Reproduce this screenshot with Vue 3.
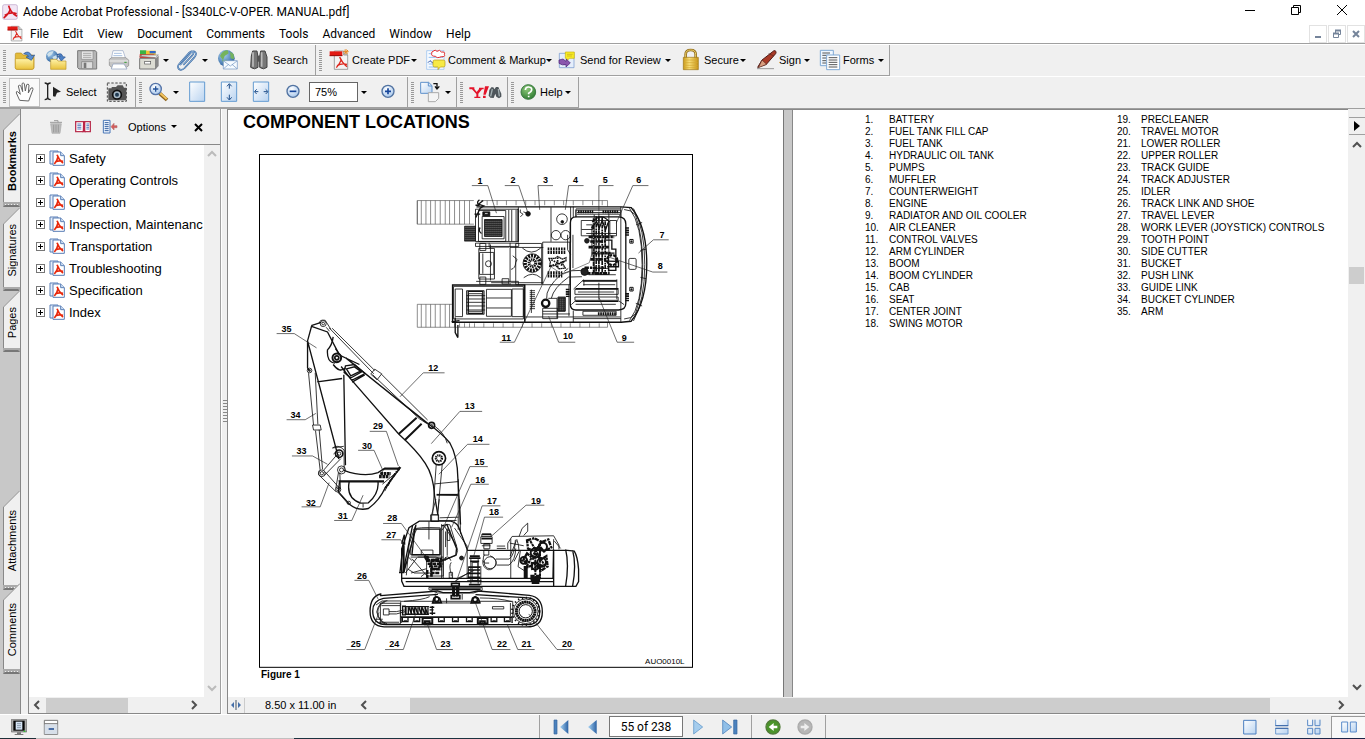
<script setup>
const menus = ['File', 'Edit', 'View', 'Document', 'Comments', 'Tools', 'Advanced', 'Window', 'Help']
const bookmarks = ['Safety', 'Operating Controls', 'Operation', 'Inspection, Maintenanc', 'Transportation', 'Troubleshooting', 'Specification', 'Index']
const partsA = ['BATTERY', 'FUEL TANK FILL CAP', 'FUEL TANK', 'HYDRAULIC OIL TANK', 'PUMPS', 'MUFFLER', 'COUNTERWEIGHT', 'ENGINE', 'RADIATOR AND OIL COOLER', 'AIR CLEANER', 'CONTROL VALVES', 'ARM CYLINDER', 'BOOM', 'BOOM CYLINDER', 'CAB', 'SEAT', 'CENTER JOINT', 'SWING MOTOR']
const partsB = ['PRECLEANER', 'TRAVEL MOTOR', 'LOWER ROLLER', 'UPPER ROLLER', 'TRACK GUIDE', 'TRACK ADJUSTER', 'IDLER', 'TRACK LINK AND SHOE', 'TRAVEL LEVER', 'WORK LEVER (JOYSTICK) CONTROLS', 'TOOTH POINT', 'SIDE CUTTER', 'BUCKET', 'PUSH LINK', 'GUIDE LINK', 'BUCKET CYLINDER', 'ARM']
const topTabs = [['Bookmarks', 'bookmarks'], ['Signatures', 'signatures'], ['Pages', 'pages']]
const lowTabs = [['Attachments', 'attachments'], ['Comments', 'comments']]

// callouts: number, text x, baseline y, leader polyline
const topCalls = [
  [1, 231, 56, '214,62 262,62 288,145'], [2, 330, 54, '313,62 355,62 383,145'], [3, 428, 55, '458,62 413,62 418,135'],
  [4, 518, 55, '550,62 505,62 495,135'], [5, 608, 55, '640,62 596,62 596,140'], [6, 708, 55, '745,62 698,62 648,175'],
  [7, 778, 219, '806,225 760,225 715,265'], [8, 773, 312, '802,322 758,322 620,275'], [9, 665, 529, '702,533 651,533 597,400'],
  [10, 488, 524, '525,533 475,533 445,455'], [11, 303, 528, '298,533 342,533 455,300'],
]
const boomCalls = [
  [35, 77, 66, '62,72 115,72 182,115'], [12, 518, 185, '567,190 503,190 433,262'], [13, 628, 298, '680,306 613,306 527,403'],
  [14, 652, 398, '702,405 636,405 550,495'], [15, 657, 466, '697,472 643,472 568,645'], [16, 659, 520, '700,525 646,525 588,655'],
  [34, 104, 326, '92,331 148,331 180,312'], [29, 352, 360, '342,366 392,366 428,470'], [30, 319, 418, '307,423 355,423 380,480'],
  [33, 122, 434, '108,440 170,440 215,465'], [32, 150, 590, '137,593 193,593 220,520'], [31, 246, 630, '235,634 288,634 322,558'],
]
const bodyCalls = [
  [28, 140, 66, '127,73 182,73 260,180'], [27, 137, 116, '122,122 180,122 192,140'], [26, 49, 239, '41,244 84,244 112,300'],
  [25, 30, 445, '17,452 72,452 115,340'], [24, 146, 445, '133,452 188,452 225,345'], [23, 300, 445, '337,452 288,452 260,375'],
  [22, 470, 445, '510,452 455,452 405,312'], [21, 543, 445, '583,452 532,452 500,375'], [20, 665, 445, '703,452 650,452 565,345'],
  [19, 572, 14, '612,18 557,18 452,112'], [18, 446, 47, '488,54 432,54 400,170'], [17, 440, 14, '480,20 425,20 345,255'],
]
</script>

<template>
  <div class="app">
    <svg class="defs" width="0" height="0" aria-hidden="true">
      <defs>
        <linearGradient id="fold" x1="0" y1="0" x2="0" y2="1"><stop offset="0" stop-color="#fff3a8" /><stop offset="1" stop-color="#e9c23c" /></linearGradient>
        <linearGradient id="sheet" x1="0" y1="0" x2="1" y2="1"><stop offset="0" stop-color="#ffffff" /><stop offset="1" stop-color="#b9d3f0" /></linearGradient>
        <linearGradient id="nav" x1="0" y1="0" x2="1" y2="0"><stop offset="0" stop-color="#a8d4f4" /><stop offset="1" stop-color="#2c62a4" /></linearGradient>
        <linearGradient id="gold" x1="0" y1="0" x2="1" y2="0"><stop offset="0" stop-color="#c99a18" /><stop offset=".4" stop-color="#f8e07a" /><stop offset="1" stop-color="#c79316" /></linearGradient>
        <radialGradient id="globe" cx=".35" cy=".3" r=".8"><stop offset="0" stop-color="#a8d0f0" /><stop offset="1" stop-color="#1f5595" /></radialGradient>
        <radialGradient id="green" cx=".4" cy=".3" r=".8"><stop offset="0" stop-color="#8cc878" /><stop offset="1" stop-color="#26742c" /></radialGradient>
        <radialGradient id="lens" cx=".4" cy=".3" r=".8"><stop offset="0" stop-color="#ffffff" /><stop offset="1" stop-color="#9cc0ea" /></radialGradient>
        <symbol id="bm" viewBox="0 0 48 48">
          <path d="M3 3h24v39H3z" fill="#e4eefb" stroke="#5b7fb6" stroke-width="3" />
          <path d="M12 6h23l11 11v29H12z" fill="#fff" stroke="#5b7fb6" stroke-width="3" /><path d="M35 6v11h11" fill="#cfe0f5" stroke="#5b7fb6" stroke-width="3" />
          <path d="M24 14q5 15 18 25M27 20q-2 12-11 22M19 36q10-6 23-2" fill="none" stroke="#e8280c" stroke-width="5" />
        </symbol>
        <symbol id="pdf" viewBox="0 0 72 72">
          <path d="M22 9h28l12 12v43H22z" fill="#f4f4f4" stroke="#777" stroke-width="2" /><path d="M50 9v12h12" fill="#ccc" stroke="#777" stroke-width="2" />
          <path d="M8 10h38v14H8z" fill="#e21a14" /><path d="M8 23h38" stroke="#950f0c" stroke-width="3" />
          <path d="M38 27q6 16 22 29M43 34q-4 13-15 25M30 53q14-8 30-4" fill="none" stroke="#dd261c" stroke-width="4" />
        </symbol>
      </defs>
    </svg>

    <header class="titlebar">
      <svg class="appicon" viewBox="0 0 48 48"><rect x="2" y="2" width="44" height="44" rx="5" fill="#f2e6f5" stroke="#b7a0c6" stroke-width="2" /><path d="M20 5q4 20 25 32M25 14q-3 15-20 28M8 34q18-12 36-5" fill="none" stroke="#d4141e" stroke-width="5" /></svg>
      <span class="title">Adobe Acrobat Professional - [S340LC-V-OPER. MANUAL.pdf]</span>
      <button class="win" aria-label="Minimize"><svg viewBox="0 0 12 12"><path d="M1 6.500h10" /></svg></button>
      <button class="win" aria-label="Restore"><svg viewBox="0 0 12 12"><path d="M1.500 3.500h7v7h-7zM3.500 3.500v-2h7v7h-2" /></svg></button>
      <button class="win" aria-label="Close"><svg viewBox="0 0 12 12"><path d="M1 1l10 10M11 1L1 11" /></svg></button>
    </header>

    <nav class="menubar">
      <svg class="docicon" viewBox="6 5 60 62"><use href="#pdf" width="72" height="72" /></svg>
      <button v-for="m in menus" :key="m" class="menu">{{ m }}</button>
      <span class="mdis">
        <button class="mdi" aria-label="Minimize document"><svg viewBox="0 0 12 12"><path d="M3 9h6" stroke-width="2" /></svg></button>
        <button class="mdi" aria-label="Restore document"><svg viewBox="0 0 12 12"><path d="M2.500 5.500h5v4h-5zM4.500 5V2.500h5v4H8" /><path d="M2 5.500h6M4 2.500h6" stroke-width="2" /></svg></button>
        <button class="mdi" aria-label="Close document"><svg viewBox="0 0 12 12"><path d="M3 3l6 6M9 3L3 9" stroke-width="2" /></svg></button>
      </span>
    </nav>

    <div class="toolrow">
      <div class="group files">
        <i class="grip"></i>
        <button class="tool" aria-label="Open"><svg viewBox="39 144 72 72"><path d="M46 163q0-4 4-4h14l5 6h28q5 0 5 5v32q0 6-6 6H51q-5 0-5-5z" fill="#e3bb3a" stroke="#b58d1c" stroke-width="2" /><path d="M46 176h55v27q0 5-5 5H51q-5 0-5-5z" fill="url(#fold)" stroke="#c59a24" stroke-width="2" /><path d="M71 161q15-12 24 6l9-2-10 16-16-10 8-2q-5-7-15-8z" fill="#5a8ed0" stroke="#254f8c" stroke-width="2" /></svg></button>
        <button class="tool" aria-label="Open web page"><svg viewBox="135 144 72 72"><circle cx="159" cy="169" r="18" fill="url(#globe)" /><path d="M144 163q8-12 20-9l-5 9-10 8zM160 171l12-6 2 9-8 9z" fill="#cde0ea" /><path d="M155 178h18l4 5h24v25h-46z" fill="url(#fold)" stroke="#bd9525" stroke-width="2" /><path d="M174 164q15-8 17 6l8 1-12 12-10-14h7q-2-4-10-5z" fill="#4c80c5" stroke="#244f8d" stroke-width="2" /></svg></button>
        <button class="tool" aria-label="Save"><svg viewBox="231 144 72 72"><path d="M239 152h53l4 5v50h-53l-4-4z" fill="#b5b5b5" stroke="#777" stroke-width="3" /><path d="M250 153h35v25h-35z" fill="#e8e8e8" stroke="#888" stroke-width="2" /><path d="M255 160h25M255 166h25M255 172h25" stroke="#888" stroke-width="2" /><path d="M251 185h33v21h-33z" fill="#ddd" stroke="#777" stroke-width="2" /><path d="M257 188h8v16h-8z" fill="#777" /></svg></button>
        <button class="tool" aria-label="Print"><svg viewBox="324 144 72 72"><path d="M340 176l5-24h30l8 24z" fill="#fff" stroke="#92a3c2" stroke-width="2" /><path d="M348 160h23M346 167h27" stroke="#a8c0e0" stroke-width="3" /><path d="M334 178l7-5h42l9 7v17l-7 5h-44l-7-6z" fill="#c5c5c5" stroke="#858585" stroke-width="2" /><path d="M334 183h57" stroke="#eee" stroke-width="3" /><path d="M345 192h33l9 15h-47z" fill="#fff" stroke="#8799b8" stroke-width="2" /><path d="M379 187h7" stroke="#393" stroke-width="3" /></svg></button>
        <button class="tool wide" aria-label="Organizer"><svg viewBox="417 144 72 72"><path d="M426 151h18l4 5v13h-22z" fill="#3bb444" /><path d="M444 152h29v15h-29z" fill="#f0c432" /><path d="M455 153h18v7h-18z" fill="#2f68cc" /><path d="M425 163h42l5 5v6h-47z" fill="#e33428" /><path d="M425 169l8-4h48l-8 8z" fill="#efefef" stroke="#777" stroke-width="2" /><path d="M425 175h48v32h-48z" fill="#dcdcd3" stroke="#777" stroke-width="3" /><path d="M474 174l8-7v31l-8 8z" fill="#888" /><rect x="440" y="184" width="18" height="8" fill="#fff" stroke="#555" stroke-width="2" /></svg><i class="arrow"></i></button>
        <button class="tool clip" aria-label="Attach"><svg viewBox="534 144 72 72"><path d="M549 195l32-36q8-8 14-2 5 6-3 15l-29 32q-10 9-17 3-8-7 3-18l28-31q8-7 12-1 2 4-4 10l-26 28" fill="none" stroke="#34659f" stroke-width="5" /><path d="M549 195l32-36q8-8 14-2 5 6-3 15l-29 32q-10 9-17 3-8-7 3-18l28-31q8-7 12-1 2 4-4 10l-26 28" fill="none" stroke="#a9c8ea" stroke-width="2" /></svg><i class="arrow"></i></button>
        <button class="tool" aria-label="E-mail"><svg viewBox="657 144 72 72"><circle cx="688" cy="175" r="25" fill="url(#globe)" /><path d="M669 168q7-17 23-17l3 9-12 8-5 13zM699 155l11 7 1 16-10-3zM675 181l14-2 3 16-9-1z" fill="#75b35d" /><path d="M679 182h42v25h-42z" fill="#f6fbff" stroke="#6c91bf" stroke-width="2" /><path d="M680 183l20 15 20-15M680 206l15-13M720 206l-15-13" fill="none" stroke="#6c91bf" stroke-width="2" /></svg></button>
        <button class="tool search"><svg viewBox="747 144 72 72"><path d="M764 153h13l3 18v31q-11 9-22 0l2-34zM788 153h13l6 18v31q-11 9-22 0v-32z" fill="#777" stroke="#444" stroke-width="3" /><path d="M765 157v43M791 157v43" stroke="#bbb" stroke-width="5" /><path d="M778 167h9v18h-9z" fill="#555" /></svg>Search</button>
      </div>
      <div class="group tasks">
        <i class="grip"></i>
        <button class="task create"><svg viewBox="0 0 72 72"><use href="#pdf" width="72" height="72" /><path d="M57 3v16M49 11h16M52 6l11 11M63 6L52 17" stroke="#e78b28" stroke-width="3" /></svg>Create PDF<i class="arrow"></i></button>
        <button class="task comment"><svg viewBox="1272 144 72 72"><path d="M1280 152h52v56h-52z" fill="#f8fbff" stroke="#8ebcee" stroke-width="2" /><path d="M1286 161h40M1286 172h43M1286 192h18M1286 201h25" stroke="#90bff0" stroke-width="3" /><path d="M1299 154q7-7 12 0 9-7 13 2 13-1 9 7 4 8-9 7-14 6-17-1-14 0-12-8-1-6 4-7z" fill="#fff" stroke="#e42828" stroke-width="3" /><path d="M1284 188l6-6 7 6 5-3" fill="none" stroke="#274fa6" stroke-width="3" /><path d="M1304 180h26q5 0 5 5v11q0 5-5 5h-9l-7 8v-8h-10q-5 0-5-5v-11q0-5 5-5z" fill="#f7ea45" stroke="#b49614" stroke-width="2" /></svg>Comment &amp; Markup<i class="arrow"></i></button>
        <button class="task send"><svg viewBox="324 22 72 72"><path d="M334 38h44v43h-44z" fill="#e5eefb" stroke="#6d91ca" stroke-width="2" /><path d="M352 34h27v19h-14l-9 7v-7h-4z" fill="#f8ec22" stroke="#c6af13" stroke-width="2" /><path d="M357 41h17M357 46h15" stroke="#c6aa20" stroke-width="2" /><path d="M333 58l12-3 9 7 1-7 12 12-13 12v-7q-12 3-21-4z" fill="#8a55ad" stroke="#472073" stroke-width="2" /></svg>Send for Review<i class="arrow"></i></button>
        <button class="task secure"><svg viewBox="684 24 72 72"><path d="M704 54V43q0-13 15-13t15 13v11" fill="none" stroke="#947020" stroke-width="8" /><path d="M704 54V43q0-13 15-13t15 13v11" fill="none" stroke="#edd16a" stroke-width="3" /><path d="M697 52h45v37h-45z" fill="url(#gold)" stroke="#9d7415" stroke-width="2" /><path d="M699 60h41M699 68h41M699 76h41M699 83h41" stroke="#d5a832" stroke-width="2" /></svg>Secure<i class="arrow"></i></button>
        <button class="task sign"><svg viewBox="911 24 72 72"><path d="M920 86h51" stroke="#999" stroke-width="3" /><path d="M922 82l13-22 36-28q9 0 5 9l-28 32z" fill="#a93a26" stroke="#511c17" stroke-width="3" /><path d="M935 60l14 13-25 10zM955 41l16 7" fill="#d89e7f" stroke="#5a2921" stroke-width="2" /></svg>Sign<i class="arrow"></i></button>
        <button class="task forms"><svg viewBox="1104 24 72 72"><path d="M1111 31h39v46h-39z" fill="#eff7ff" stroke="#7fa9d5" stroke-width="3" /><path d="M1117 39h23M1117 46h19M1117 54h19M1117 62h19M1117 69h19" stroke="#555" stroke-width="3" /><path d="M1130 45h39v44h-39z" fill="#fff" stroke="#7fa9d5" stroke-width="3" /><path d="M1136 53h26M1136 60h26M1136 67h26M1136 74h26M1136 81h26" stroke="#555" stroke-width="3" /></svg>Forms<i class="arrow"></i></button>
      </div>
    </div>

    <div class="toolrow second">
      <div class="group selects">
        <i class="grip"></i>
        <button class="hand" aria-label="Hand tool"><svg viewBox="39 240 72 72"><path d="M59 301l-10-22q-1-6 4-4l8 8-6-25q2-5 7-1l6 18-2-24q3-5 7 0l3 22 4-19q5-4 7 1l-2 24 8-15q7-3 6 4l-13 35z" fill="#fff" stroke="#666" stroke-width="3" /></svg></button>
        <button class="tool seltool"><svg viewBox="129 240 72 72"><path d="M137 249q9 0 9 7 0-7 9-7M146 256v36M137 299q9 0 9-7 0 7 9 7" fill="none" stroke="#222" stroke-width="4" /><path d="M162 260l24 15-12 3-5 12-7-1z" fill="#222" /></svg>Select</button>
        <button class="tool" aria-label="Snapshot"><svg viewBox="315 240 72 72"><rect x="322" y="249" width="57" height="55" fill="#e8e8e8" stroke="#444" stroke-width="3" stroke-dasharray="7 5" /><path d="M325 265h10v-4h13l5-5h15l4 7h7v38h-54z" fill="#555" /><circle cx="351" cy="284" r="13" fill="#a9bbc8" stroke="#111" stroke-width="5" /><circle cx="351" cy="284" r="6" fill="#203b52" /></svg></button>
      </div>
      <div class="group zooms">
        <i class="grip"></i>
        <button class="tool wide zoomtool" aria-label="Zoom in tool"><svg viewBox="438 240 72 72"><path d="M476 280l22 20" stroke="#8c621a" stroke-width="11" /><path d="M476 278l21 19" stroke="#f3c35d" stroke-width="6" /><circle cx="464" cy="267" r="17" fill="url(#lens)" stroke="#5674a8" stroke-width="4" /><path d="M456 267h16M464 259v16" stroke="#24539b" stroke-width="4" /></svg><i class="arrow"></i></button>
        <button class="tool fit" aria-label="Actual size"><svg viewBox="561 240 72 72"><path d="M575 246h45v58h-45z" fill="url(#sheet)" stroke="#639bd1" stroke-width="3" /></svg></button>
        <button class="tool fit" aria-label="Fit page"><svg viewBox="657 240 72 72"><path d="M670 246h46v58h-46z" fill="url(#sheet)" stroke="#639bd1" stroke-width="3" /><path d="M694 253v13M687 259l7-8 7 8M694 284v14M687 292l7 8 7-8" fill="none" stroke="#204e89" stroke-width="3" /></svg></button>
        <button class="tool fit" aria-label="Fit width"><svg viewBox="753 240 72 72"><path d="M766 246h46v58h-46z" fill="url(#sheet)" stroke="#639bd1" stroke-width="3" /><path d="M781 275h-10M776 268l-7 7 7 7M797 275h11M803 268l7 7-7 7" fill="none" stroke="#204e89" stroke-width="3" /></svg></button>
        <button class="tool zoomout" aria-label="Zoom out"><svg viewBox="849 240 72 72"><circle cx="885" cy="274" r="18" fill="url(#lens)" stroke="#5273a1" stroke-width="4" /><path d="M875 274h20" stroke="#16469b" stroke-width="5" /></svg></button>
        <span class="zoombox"><input value="75%" aria-label="Zoom level"><button class="drop" aria-label="Zoom levels"><i class="arrow"></i></button></span>
        <button class="tool" aria-label="Zoom in"><svg viewBox="1131 240 72 72"><circle cx="1167" cy="274" r="18" fill="url(#lens)" stroke="#5273a1" stroke-width="4" /><path d="M1158 274h18M1167 265v18" stroke="#16469b" stroke-width="5" /></svg></button>
      </div>
      <div class="group rotate">
        <i class="grip"></i>
        <button class="tool wide" aria-label="Rotate"><svg viewBox="1257 240 72 72"><path d="M1262 247h24l10 10v23h-34z" fill="url(#sheet)" stroke="#5e91cb" stroke-width="3" /><path d="M1285 247v11h11" fill="none" stroke="#5e91cb" stroke-width="3" /><path d="M1285 278h31v17l-10 10h-21z" fill="#f4f4f4" stroke="#aaa" stroke-width="3" /><path d="M1300 251h11v12M1305 259l6 8 7-8" fill="none" stroke="#111" stroke-width="4" /></svg><i class="arrow"></i></button>
      </div>
      <div class="group yahoo">
        <i class="grip"></i>
        <button class="tool" aria-label="Search web"><svg class="ylogo" viewBox="60 130 99 48"><path d="M61 140h15v5l7 9 7-9v-4h14v5h-5l-11 13v9h6v4H76v-4h6v-8l-13-14h-8zM108 137h12l-10 25h-7zM102 165h8v7h-8z" fill="#e4142a" /><path d="M121 148l6-8h6l3 6 5-7h7l9 20v9l-7 5-8-5-3-9-5 13-10-1-5-6z" fill="#4e565b" /><path d="M130 145l-5 22M148 145l3 22" stroke="#a3afb2" stroke-width="4" /></svg></button>
      </div>
      <div class="group help">
        <i class="grip"></i>
        <button class="task helpbtn"><svg viewBox="200 117 72 72"><circle cx="237" cy="153" r="22" fill="url(#green)" stroke="#3a7a40" stroke-width="3" /><path d="M228 147q1-10 10-9 10 1 9 9-1 6-9 10v3M238 164v5" fill="none" stroke="#fff" stroke-width="5" /></svg>Help<i class="arrow"></i></button>
      </div>
    </div>

    <main class="work">
      <aside class="tabs">
        <button v-for="t in topTabs" :key="t[0]" class="tab" :class="t[1]">
          <svg class="slant" viewBox="0 0 17 17"><path d="M0 17L17 0V17z" /><path d="M0 17.500L17 .5" class="edge" /></svg>
          <span class="tabface"><span class="tabtext">{{ t[0] }}</span></span><i class="tabfoot"></i>
        </button>
        <span class="tabspace"></span>
        <button v-for="t in lowTabs" :key="t[0]" class="tab" :class="t[1]">
          <svg class="slant" viewBox="0 0 17 17"><path d="M0 17L17 0V17z" /><path d="M0 17.500L17 .5" class="edge" /></svg>
          <span class="tabface"><span class="tabtext">{{ t[0] }}</span></span><i class="tabfoot"></i>
        </button>
      </aside>

      <section class="panel">
        <div class="panelhead">
          <button aria-label="Delete"><svg viewBox="0 0 48 48"><path d="M8 14h32l-4 29H12z" fill="#bbb" stroke="#aaa" stroke-width="2" /><path d="M6 10h36M18 5h12v5M17 17v23M24 17v23M31 17v23" fill="none" stroke="#999" stroke-width="3" /></svg></button>
          <button aria-label="New bookmark"><svg viewBox="0 0 48 48"><path d="M2 8h44v30H2z" fill="#fff" stroke="#ba3452" stroke-width="4" /><path d="M7 15h12M7 20h12M7 25h12M7 30h12M34 15h8M34 20h8M34 25h8M34 30h8" stroke="#5c7dbd" stroke-width="3" /><path d="M24 7h7v34l-4-4-4 4z" fill="#bb2448" /></svg></button>
          <button aria-label="Expand current bookmark"><svg viewBox="0 0 48 48"><path d="M4 4h20v38H4z" fill="#f3f8ff" stroke="#4775b5" stroke-width="3" /><path d="M8 11h12M8 17h12M8 23h12M8 29h12M8 35h12" stroke="#315e9f" stroke-width="3" /><path d="M45 20v6h-9v7l-9-10 9-10v7z" fill="#d65a5a" stroke="#b76c6c" stroke-width="2" /></svg></button>
          <button class="options">Options<i class="arrow"></i></button>
          <button class="closepanel" aria-label="Close panel"><svg viewBox="0 0 12 12"><path d="M2 3l7 7M9 3l-7 7" stroke="#000" stroke-width="2" /></svg></button>
        </div>
        <div class="treebox">
          <ul class="tree">
            <li v-for="b in bookmarks" :key="b"><button class="plus" :aria-label="'Expand ' + b"></button><svg class="bmicon" viewBox="0 0 48 48"><use href="#bm" width="48" height="48" /></svg><a href="#">{{ b }}</a></li>
          </ul>
          <div class="vs">
            <svg class="chev pale" viewBox="0 0 12 12"><path d="M2 8l4-4 4 4" /></svg>
            <svg class="chev pale" viewBox="0 0 12 12"><path d="M2 4l4 4 4-4" /></svg>
          </div>
        </div>
        <div class="hs">
          <svg class="chev" viewBox="0 0 12 12"><path d="M8 2L4 6l4 4" /></svg><i class="thumb"></i><svg class="chev end" viewBox="0 0 12 12"><path d="M4 2l4 4-4 4" /></svg>
        </div>
      </section>

      <div class="splitter"><i></i></div>

      <section class="doc">
        <div class="canvas">
          <article class="page left">
            <h1>COMPONENT LOCATIONS</h1>
            <svg class="figure" viewBox="258 154 435 515" role="img" aria-label="Excavator component diagram">
              <rect x="258.500" y="154.500" width="434" height="514" fill="#fff" stroke="#000" />
              <g transform="translate(400 165) scale(.33333)" class="art">
                <path d="M220 107H50v71h170M50 419h104M50 488h572v-15M240 107h382v18M50 419v69M50 107v71" class="grey" />
                <path d="M62 107v71M76 107v71M90 107v71M104 107v71M119 107v71M134 107v71M147 107v71M162 107v71M177 107v71M192 107v71M207 107v71M62 419v69M76 419v69M90 419v69M104 419v69M119 419v69M134 419v69M147 419v69M162 476v12M177 476v12M192 476v12M207 476v12M222 476v12M250 476v12M279 476v12M308 476v12M338 476v12M366 476v12M395 476v12M424 476v12M453 476v12M482 476v12M510 476v12M539 476v12M568 476v12M597 476v12M260 107v14M290 107v14M318 107v14M347 107v14M376 107v14M404 107v14M433 107v14M462 107v14M490 107v14M519 107v14M548 107v14M577 107v14M606 107v14" class="grey" />
                <path d="M228 126h435l30 2q47 55 47 170t-47 172l-30 3H156V361h217v111" class="bold" />
                <path d="M662 126v346M672 134q20 0 34 16 22 65 22 150t-22 148q-14 15-34 15M688 130q38 50 38 170t-38 168M700 131q34 60 34 168t-34 170M708 180l18-7M721 257l17-4M721 338l17 4M707 416l19 8" class="line" />
                <path d="M527 156h128q22 0 22 22v238q0 20-22 20H527q-17 0-17-18V175q0-19 17-19z" class="bold" />
                <path d="M519 125v32M527 132h135M527 157v-21h135v20M530 143h130M530 148h130M519 438v34M519 462h143M548 440h100v12h-100zM374 457h287" class="line" />
                <path d="M533 141h46M607 141h47M593 447h54" stroke-width="9" stroke-dasharray="5 2" />
                <path d="M225 133h128v97H225zM234 137h82v93h-82zM245 155h66v67h-66zM325 135v95M334 135v95M347 135v95M353 132v98" class="line" />
                <path d="M252 164h53v51h-53z" fill="url(#mesh)" />
                <path d="M247 141h21v12h-21z" fill="#111" /><path d="M252 144h11v5h-11z" fill="#fff" />
                <path d="M237 105q-9 6-4 13l17 5-11 7-13 28M248 107l-15 12M225 121h12M222 148h17M239 188q-7 10 4 18" class="bold" />
                <path d="M192 184h33v45h-33z" fill="url(#mesh)" stroke="#111" stroke-width="2" />
                <path d="M360 134q-5 10 8 14l-8 8M369 141l11 4M354 233v-106M452 127v104M511 126v107M527 133v24" class="line" />
                <circle cx="383" cy="147" r="7" fill="#111" /><circle cx="485" cy="163" r="16" /><circle cx="486" cy="171" r="4" fill="#111" />
                <circle cx="467" cy="211" r="14" /><circle cx="496" cy="211" r="14" />
                <path d="M225 235h130v10H225zM235 251h47v92h-47zM237 263h43v66h-43zM247 266v61M270 239v108M227 350h127v11M266 234v13h60M329 234v127M329 248h100M346 236h78v124h-78zM427 232h82v128h-82zM332 354h96M373 361v111M272 354h54M238 236h18v21h-18zM238 337h18v22h-18zM305 342h20v16h-20z" class="line" />
                <circle cx="264" cy="297" r="9" /><path d="M337 273l13 11-4 9q-1 18-14 21" class="line" />
                <circle cx="396" cy="295" r="28" /><circle cx="396" cy="295" r="22" stroke-width="11" stroke-dasharray="6 3" /><circle cx="396" cy="295" r="10" stroke-width="9" stroke-dasharray="4 2" /><path d="M366 250q27 24 55 0M370 339q27-21 51 0" class="line" />
                <path d="M442 253h53M442 263h53M442 324h44M442 334h44" stroke-width="9" stroke-dasharray="5 3" />
                <path d="M446 281h18l8-6 14 8 11-4v9l-13 4 11 18-19 2-10-10-18 3 2-13z" stroke-width="4" stroke-dasharray="5 1" /><path d="M453 285l36 18M472 278v30M449 304l45-14" stroke-width="5" stroke-dasharray="5 3" />
                <path d="M159 365h210v98H159zM164 373h22v83h-22zM198 378h53v71h-53zM204 387h41v53h-41zM258 374h75v81h-75zM258 400h75M258 430h75M335 373h34v83h-34zM198 393h56M198 403h56M198 413h56M198 424h56M198 436h56" class="line" /><path d="M203 380h44v66h-44z" class="bold" />
                <path d="M164 459v45l8 15v-38M153 471l24-3" class="bold" /><path d="M393 375v70M388 378h16M388 384h16M388 390h16M388 396h16M388 402h16M388 408h16M388 414h16M388 420h16M388 426h16M388 432h16" class="line" />
                <circle cx="436" cy="416" r="11" stroke-width="7" /><path d="M427 431h45v31h-45zM444 401h26v60M473 397h22v43h-22zM427 440h43M427 448h43M470 448h39" class="line" /><path d="M474 399h20v40h-20z" fill="url(#mesh)" />
                <path d="M439 402q-4-32 46-75 30-13 59-10M453 401q7-32 52-64l40-1M492 320l12-9M506 360v95M502 210v45l9 14M518 210v100" class="line" />
                <path d="M543 167h82v46h-82zM558 180h19v14h-33M629 167h20v46h-20zM558 206h90M575 182v94M582 149v178M596 145v185M626 145v125M565 330h82M584 311h42v18h-42z" class="line" />
                <path d="M576 172q28-32 52 0M574 190l15-20 8 20 9-23 10 28 8-22" class="bold" />
                <path d="M580 160v165M588 154v170M596 154v176M606 157v168M615 169v160" stroke-width="5" stroke-dasharray="12 3 5 2" />
                <path d="M565 216h77M570 230h47M565 247h61M575 265h56M570 284h49M553 309h58M558 326h70" stroke-width="8" stroke-dasharray="13 3 7 2" />
                <circle cx="560" cy="228" r="7" fill="#222" /><circle cx="553" cy="321" r="11" fill="#222" /><circle cx="636" cy="286" r="15" stroke-width="7" stroke-dasharray="9 3" /><path d="M611 226h24v27h12v64h-22v-52h18M612 289l43 1v16h-34" class="bold" />
                <path d="M548 347h102M550 345l-30 28M551 347v16M650 344v60M524 374h130v15H524zM533 382h109M524 397h130v10H524zM526 419h121M513 420l12-11M655 408l17 12M596 354v51M549 360h96" class="line" /><path d="M547 349h103M526 372h129M525 410h130" class="bold" />
                <path d="M681 187v28M681 385v25M502 372v25" stroke-width="11" stroke-dasharray="5 2" />
                <path d="M689 224h10v11h-10zM689 368h10v11h-10z" stroke-width="3" /><rect x="686" y="281" width="22" height="33" rx="4" /><circle cx="694" cy="230" r="2" fill="#111" /><circle cx="694" cy="374" r="2" fill="#111" />
                <path d="M453 307l34 22 80-35 22-75" class="grey" />
                <g v-for="c in topCalls" :key="c[0]"><polyline :points="c[3]" class="leader" /><text :x="c[1]" :y="c[2]">{{ c[0] }}</text></g>
              </g>
              <g transform="translate(255 310) scale(.33333)" class="art">
                <path d="M167 50L155 94l94 355M167 50l48 17 34 66M264 196l5 272M184 217l75-10M155 93v82l6 9M166 48l30-10" class="bold" />
                <circle cx="202" cy="42" r="9" /><circle cx="202" cy="42" r="4" /><path d="M190 41q1-12 18-9l17 27M211 53l10 12" class="line" />
                <path d="M220 55l134 138M229 56l128 127M350 195l141 133M377 194l139 138M491 328l27 17M345 194l12-15 21 14-14 18z" class="line" />
                <path d="M232 82q-3 25-17 39-3 38 23 40M256 171l29 38 144 165q55 50 80 88 25 37 28 98l10 58M239 117l15 21 57 27M270 145l243 196M328 192l190 151q45 32 65 58 23 40 24 106l8 139" class="bold" />
                <circle cx="243" cy="145" r="13" stroke-width="6" /><circle cx="243" cy="145" r="6" stroke-width="5" /><path d="M232 165q20 27 36 10" class="bold" />
                <path d="M269 169l27-4 32 27-37 19-26-22zM272 178l24-6 18 13-29 14zM282 207l38-21M289 218l38-22" class="bold" />
                <path d="M429 374l54-49M447 393l51-50" stroke-width="6" /><circle cx="528" cy="348" r="9" stroke-width="5" /><circle cx="528" cy="348" r="3" /><path d="M538 351q29 20 37 51" class="line" />
                <circle cx="161" cy="183" r="7" /><circle cx="161" cy="183" r="3" /><path d="M158 191l15 156M178 190l8 155M170 347h23l3 15h-23zM179 364l14 119M190 361l10 119" class="line" />
                <circle cx="550" cy="447" r="20" stroke-width="5" /><circle cx="550" cy="447" r="9" stroke-width="7" stroke-dasharray="4 2" /><path d="M542 465l-11 151M560 465l-14 151M525 617h23v19h-23zM537 524l71-7M543 558l65 1M608 510v152M550 634h53" class="line" /><path d="M543 556h64" class="bold" />
                <circle cx="250" cy="433" r="11" stroke-width="5" /><circle cx="250" cy="433" r="5" /><circle cx="198" cy="492" r="10" /><circle cx="198" cy="492" r="5" /><circle cx="257" cy="482" r="12" /><circle cx="257" cy="482" r="6" /><circle cx="247" cy="541" r="8" /><circle cx="247" cy="541" r="4" /><circle cx="279" cy="581" r="5" />
                <path d="M230 416q16-13 35 6v63M242 438l-38 44M255 448l-49 50M190 484l-2 12 52 51M208 488l45 51M247 550l31 35M246 423l-13 11M240 538l8-48M254 540l-2-50M230 416l34-5" class="line" />
                <path d="M264 483q60 22 103 7l20-13h46L388 536q-15 35-50 62-32 8-57-13l-33-37 3-30h134M248 515h137M280 519q-9 48 35 63l23-1q31-28 29-61" class="bold" /><path d="M380 481h52L380 525M417 492l-20 38M406 509l-19 37M388 476l-16 20M322 595v-12" class="line" /><path d="M374 493h32M370 502h31" stroke-width="10" stroke-dasharray="8 2" />
                <path d="M433 473l-45 65" stroke-width="6" stroke-dasharray="5 3" />
                <g v-for="c in boomCalls" :key="c[0]"><polyline :points="c[3]" class="leader" /><text :x="c[1]" :y="c[2]">{{ c[0] }}</text></g>
              </g>
              <g transform="translate(340 500) scale(.33333)" class="art">
                <path d="M214 80l22-14h94q18 4 24 17l27 71h301l20 2q10 15 13 55v37l-8 14H190l-7-16V149l22-63 9-6M183 238h458M195 248h446M640 151v111M676 151q11 45 0 110M697 153q12 45 0 108" class="bold" />
                <path d="M226 76q-8 20-21 62-4 50-8 91M218 91q10-8 81-5v81h-89q-1-39 18-77M205 175l9 10M210 174h98M303 75v165M308 77v163M303 94l15-18 10 1 20 64q7 13-1 28l-43 17M320 88v82M315 97v47M320 93h8v31h-8zM201 210l20 12h54v11M211 222l47-13M241 233l14-11M259 225v14M183 238h119M331 185q-8-24-27 1M315 175v10M332 190q-8 11 0 34v8M326 220h10v17h-10z" class="line" />
                <path d="M190 140v80M183 134l8-27 1 30M175 221h13V130l-10 90" class="bold" /><path d="M216 78l-29 142M226 78l-13 56-24 88" class="bold" />
                <path d="M222 90h76v77h-84zM303 80l16-4 29 72-2 20-40 17" class="bold" />
                <path d="M242 165v-12h35v15M231 174h55l23 8M214 179l48 55M229 176l-35 46M258 186h50v45h-50z" class="line" /><path d="M252 169l7 15 46-5M256 185h48M261 194h45M265 202h40M272 211h31M270 222h26M260 213v28M272 207v27" stroke-width="7" stroke-dasharray="12 2" /><circle cx="259" cy="177" r="6" fill="#111" /><circle cx="285" cy="196" r="14" stroke-width="6" /><circle cx="363" cy="177" r="6" fill="#222" />
                <path d="M286 0l-13 47M296 0l-5 45M273 47h21v20h-21zM357 0l3 104M354 54l-57 2M342 87l38 54v97M265 67v54M351 238l50-24M311 80l37 60M380 224l-36 22" class="line" />
                <path d="M424 105h28v8h-28zM421 113h34v20h-34zM430 134h18v15h-18zM424 140h26M430 153h15v15h-15zM433 168q-4-3-5 17l4 7h14M449 170q20 8 18 25-8 19-24 17-18-7-16-28" class="line" /><path d="M425 106h27M423 119h32M431 134h16" stroke-width="5" /><circle cx="449" cy="191" r="18" /><path d="M466 180h40q17-11 19-58M468 198h38q19-15 20-50" class="line" />
                <path d="M388 171h30M386 177h34M389 187h27M383 204h36M383 213h36M380 223h40M382 235h38M380 246h43M385 257h34" stroke-width="5" /><path d="M391 180v74M413 180v74M384 205v33M421 201v57M395 190h17v55h-17z" class="line" />
                <path d="M502 151v-19l13-20 125-2 16 28v13M511 119v121M508 132l42 8M536 112l9-24 17-16v24l-12 13M469 141h25M469 148h27M529 120q7 18 7 37l-15 30M640 120l-3 120M642 126l19 22M540 154l-7 49 19 12M509 171l19-47" class="line" />
                <path d="M560 124l22-7 21 12 21-8 9 24-22 12-14-16-13 15-21-7zM560 163l-10 18 13 23 23-9 16 20 20-13-4-31-18 11-10-16-12 13z" stroke-width="7" stroke-dasharray="13 3 7 2" /><path d="M570 126l45 77M604 125l-47 79M585 151v98M599 133v108M542 184l71 17M572 211l44-15" stroke-width="6" stroke-dasharray="8 2" />
                <circle cx="608" cy="143" r="12" stroke-width="6" /><circle cx="585" cy="161" r="14" stroke-width="6" /><circle cx="604" cy="190" r="13" stroke-width="6" /><circle cx="550" cy="184" r="10" stroke-width="6" /><circle cx="585" cy="201" r="11" stroke-width="6" /><path d="M554 201v38M558 201v38M570 238h29M571 244h28M574 251h23M570 231h13M587 231h14" stroke-width="8" />
                <path d="M265 265h160v9l-26 8H291l-26-10zM268 270h154" class="line" /><path d="M273 271h147" stroke-width="5" />
                <path d="M333 253h23v8h-23zM337 262v28M354 262v28M332 290h26v9h-26zM341 259v34M349 259v34" stroke-width="5" />
                <path d="M120 290L291 276l16 5h80l25-5 155 13q39 5 39 50 0 45-48 45H130q-42-3-42-47 0-45 32-52zM128 298l164-12M405 287l150 9q43 1 43 42t-40 39H135q-39-2-39-41 0-31 32-38" class="bold" />
                <path d="M134 308q-23 9-23 33t25 36M119 313v62h60V313zM122 320h56M128 330h17v18h-17zM145 338h22l25-5M145 345h22l27-7M180 307h337v47H180zM106 318l18-12h56M104 361h22M115 370h60M140 305q-26 2-32 34 7 29 31 35M284 284v20M318 298v15M365 285v17M276 312h142M456 323h34v7h-34zM190 307q57-4 77-14M510 312v39M418 297q57 0 96 11" class="line" />
                <path d="M186 322h8v26h-8zM193 323h72M193 346h72" class="bold" /><path d="M205 325l8 20M215 325l7 20M224 325l8 20M235 325l7 20M244 325l9 20M253 325l8 20" stroke-width="5" /><path d="M196 325v20M203 325v20M212 325v20M222 325v20M232 325v20M243 325v20M254 325v20M262 325v20M267 325h14M267 333h12M267 343h17M275 321v27" stroke-width="4" />
                <path d="M276 312l4-14 8-5 9 5 5 13zM392 312l4-14 8-5 9 5 5 13z" stroke-width="5" /><circle cx="288" cy="301" r="7" stroke-width="5" /><circle cx="404" cy="302" r="7" stroke-width="5" />
                <path d="M180 355h336M181 356v16M515 356v16" class="bold" /><path v-for="x in [193, 228, 302, 344, 386, 460, 500]" :key="x" :d="`M${x - 8} 357v11h17v-11M${x - 4} 366h8v4`" stroke-width="4" />
                <path d="M246 357h29v17h-29zM253 367h14v9h-14zM412 357h29v17h-29zM419 367h14v9h-14z" stroke-width="6" />
                <circle cx="556" cy="337" r="37" /><circle cx="556" cy="337" r="28" stroke-width="9" stroke-dasharray="6 1" /><circle cx="556" cy="337" r="20" stroke-width="3" /><circle cx="556" cy="337" r="41" stroke-width="6" stroke-dasharray="4 8" />
                <g v-for="c in bodyCalls" :key="c[0]"><polyline :points="c[3]" class="leader" /><text :x="c[1]" :y="c[2]">{{ c[0] }}</text></g>
              </g>
              <text x="645" y="665" class="code">AUO0010L</text>
              <defs><pattern id="mesh" width="6" height="6" patternUnits="userSpaceOnUse"><path d="M0 0h6v6H0z" fill="#222" /><path d="M0 1h3" stroke="#ddd" stroke-width="2" /></pattern></defs>
            </svg>
            <p class="caption">Figure 1</p>
          </article>
          <article class="page right">
            <ol class="parts"><li v-for="(p, i) in partsA" :key="p"><span>{{ i + 1 }}.</span>{{ p }}</li></ol>
            <ol class="parts"><li v-for="(p, i) in partsB" :key="p"><span>{{ i + 19 }}.</span>{{ p }}</li></ol>
          </article>
        </div>
        <div class="hs dochs">
          <button class="split" aria-label="Split"><svg viewBox="0 0 12 12"><path d="M6 1v10" stroke="#456" /><path d="M4 3v6L1 6zM8 3v6l3-3z" fill="#456fa8" /></svg></button>
          <span class="size">8.50 x 11.00 in</span>
          <svg class="chev" viewBox="0 0 12 12"><path d="M8 2L4 6l4 4" /></svg>
          <span class="track"><i class="thumb"></i></span>
          <svg class="chev end" viewBox="0 0 12 12"><path d="M4 2l4 4-4 4" /></svg>
        </div>
      </section>
      <div class="docvs">
        <button class="flyout" aria-label="Document menu"></button>
        <svg class="chev" viewBox="0 0 12 12"><path d="M2 8l4-4 4 4" /></svg>
        <span class="vtrack"><i class="vthumb"></i></span>
        <svg class="chev" viewBox="0 0 12 12"><path d="M2 4l4 4 4-4" /></svg>
      </div>
    </main>

    <footer class="status">
      <div class="views">
        <button aria-label="Full screen"><svg viewBox="0 0 48 48"><path d="M1 1h46v38H1z" fill="#aaa" stroke="#666" stroke-width="2" /><path d="M7 5h34v30H7z" fill="#050505" /><path d="M14 8h20v24H14z" fill="#d6e5f5" /><path d="M18 14h12M18 20h12M18 26h12" stroke="#678" stroke-width="2" /><path d="M18 40h12v5h7v3H11v-3h7z" fill="#777" /><path d="M38 37h5" stroke="#3c3" stroke-width="4" /></svg></button>
        <button aria-label="Hide toolbars"><svg viewBox="0 0 48 48"><path d="M4 4h40v42H4z" fill="#fff" stroke="#777" stroke-width="3" /><path d="M5 16h38v29H5z" fill="#d7dfe9" /><path d="M4 14h40" stroke="#777" stroke-width="3" /><path d="M17 30h16" stroke="#2e5798" stroke-width="5" /></svg></button>
      </div>
      <div class="pager">
        <button aria-label="First page"><svg viewBox="0 0 48 48"><path d="M3 3h9v42H3z" fill="#4c82bd" stroke="#34659e" stroke-width="2" /><path d="M46 3v42L21 24z" fill="url(#nav)" /></svg></button>
        <button aria-label="Previous page"><svg viewBox="0 0 48 48"><path d="M38 3v42L12 24z" fill="url(#nav)" /></svg></button>
        <input value="55 of 238" aria-label="Page">
        <button aria-label="Next page"><svg viewBox="0 0 48 48"><path d="M11 3v42l27-21z" fill="#a4cced" stroke="#508cc3" stroke-width="2" /></svg></button>
        <button aria-label="Last page"><svg viewBox="0 0 48 48"><path d="M2 3v42l27-21z" fill="#90bfe8" stroke="#3973b4" stroke-width="2" /><path d="M35 3h10v42H35z" fill="#4c82bd" stroke="#34659e" stroke-width="2" /></svg></button>
      </div>
      <div class="history">
        <button aria-label="Previous view"><svg viewBox="0 0 48 48"><circle cx="24" cy="24" r="21" fill="#4b942b" stroke="#517b39" stroke-width="4" /><path d="M37 20H26v-8L11 24l15 12v-8h11z" fill="#fff" /></svg></button>
        <button aria-label="Next view"><svg viewBox="0 0 48 48"><circle cx="24" cy="24" r="21" fill="#b7b7b7" stroke="#aaa" stroke-width="4" /><path d="M11 20h11v-8l15 12-15 12v-8H11z" fill="#eee" /></svg></button>
      </div>
      <div class="layouts">
        <button aria-label="Single page"><svg viewBox="0 0 48 48"><path d="M5 4h37v41H5z" fill="url(#sheet)" stroke="#4a7ec0" stroke-width="3" /></svg></button>
        <button aria-label="Continuous"><svg viewBox="0 0 48 48"><path d="M5 2v18h37V2M5 45V28h37v17z" fill="url(#sheet)" stroke="#6f9bd0" stroke-width="3" /><path d="M4 20h39M4 28h39" stroke="#3867a8" stroke-width="3" /></svg></button>
        <button aria-label="Continuous facing"><svg viewBox="0 0 48 48"><path d="M5 2v18h15V2M27 2v18h15V2M5 45V28h15v17zM27 45V28h15v17z" fill="url(#sheet)" stroke="#5787c4" stroke-width="3" /></svg></button>
        <button class="on" aria-label="Facing"><svg viewBox="0 0 48 48"><path d="M2 9h18v30H2zM28 9h18v30H28z" fill="url(#sheet)" stroke="#5a8bca" stroke-width="3" /></svg></button>
      </div>
    </footer>
    <div class="edgeline"></div>
  </div>
</template>

<style>
html, body { margin: 0; background: #f0f0f0; }
</style>

<style scoped>
* { box-sizing: border-box; }
.app { height: 100vh; display: flex; flex-direction: column; overflow: hidden; background: #f0f0f0; color: #000; font: 11px "Liberation Sans", Arial, sans-serif; }
.defs { position: absolute; }
button { font: inherit; color: inherit; background: none; border: 0; padding: 0; margin: 0; display: flex; align-items: center; white-space: nowrap; flex: none; }
svg { display: block; flex: none; }
.titlebar { flex: 0 0 24px; display: flex; align-items: center; background: #fff; padding-left: 2px; }
.appicon { width: 16px; height: 16px; }
.title { flex: 1; margin-left: 5px; font: 12px/16px Roboto, "Open Sans", sans-serif; white-space: nowrap; }
.win { width: 46px; height: 20px; justify-content: center; align-self: flex-start; }
.win svg { width: 12px; height: 12px; stroke: #000; fill: none; }
.menubar { flex: 0 0 20px; display: flex; align-items: center; gap: 14px; background: #fff; padding-left: 7px; border-bottom: 1px solid #a0a0a0; font: 12px/16px Roboto, "Open Sans", sans-serif; }
.docicon { width: 16px; height: 17px; margin-right: -7px; }
.mdis { margin-left: auto; display: flex; gap: 1px; }
.mdi { width: 18px; height: 18px; justify-content: center; border: 1px solid #e2e2e2; }
.mdi svg { width: 12px; height: 12px; stroke: #75849a; fill: none; }

.toolrow { flex: 0 0 32px; display: flex; border-top: 1px solid #fff; }
.group { display: flex; align-items: center; padding-left: 3px; border: solid #a0a0a0; border-width: 0 1px 1px 0; }
.grip { flex: 0 0 3px; height: 21px; background: repeating-linear-gradient(#999 0 1px, #f0f0f0 1px 2px); }
.arrow { width: 0; height: 0; border: 3px solid transparent; border-top-color: #000; border-bottom: 0; flex: none; }
.tool { width: 31px; }
.tool svg, .task svg { width: 24px; height: 24px; }
.tool.wide { width: 38px; }
.tool.clip { width: 41px; }
.wide .arrow { margin-left: 2px; }
.clip .arrow { margin-left: 3px; }
.files { width: 316px; }
.files .grip { margin-right: 7px; }
.search { width: auto; gap: 2px; }
.tasks { width: 574px; }
.tasks .grip { margin-right: 5px; }
.task { gap: 1px; }
.task .arrow { margin-left: auto; margin-right: 8px; }
.create { width: 97px; }
.comment { width: 132px; gap: 0; }
.send { width: 123px; gap: 0; }
.secure { width: 75px; }
.sign { width: 64px; }
.forms { width: 74px; }
.selects { width: 136px; }
.selects .grip { margin-right: 3px; }
.hand { width: 31px; height: 29px; justify-content: center; border: 1px solid #c0c0c0; background: #fafafa; margin-right: 2px; }
.hand svg { width: 24px; height: 24px; }
.seltool { width: 63px; }
.zooms { width: 272px; }
.zooms .grip { margin-right: 5px; }
.zoomtool { width: 41px; }
.fit { width: 32px; }
.zoomout { width: 28px; }
.zoombox { display: flex; align-items: center; margin-right: 9px; }
.zoombox input { width: 49px; height: 20px; border: 1px solid #666; background: #fff; padding: 0 5px; font: 11px "Liberation Sans", sans-serif; }
.drop { width: 9px; justify-content: flex-end; }
.rotate { width: 49px; }
.rotate .grip { margin-right: 5px; }
.yahoo { width: 51px; }
.yahoo .grip { margin-right: 6px; }
.tool .ylogo { width: 33px; height: 16px; }
.help { width: 71px; }
.help .grip { margin-right: 2px; }
.helpbtn { width: 63px; gap: 0; }

.work { flex: 1; min-height: 0; display: flex; border-top: 1px solid #a0a0a0; }
.tabs { flex: 0 0 20px; display: flex; flex-direction: column; background: #c8c8c8; border-right: 1px solid #888; padding-left: 3px; }
.tab { flex-direction: column; align-items: stretch; width: 17px; }
.slant { width: 17px; height: 17px; fill: #f0f0f0; }
.edge { stroke: #888; fill: none; }
.tabface { flex: 1; display: flex; align-items: center; justify-content: center; background: #f0f0f0; border-left: 1px solid #888; }
.tabtext { writing-mode: vertical-rl; transform: rotate(180deg); line-height: 14px; }
.tabfoot { height: 5px; background: repeating-linear-gradient(90deg, #eee 0 1px, #aaa 1px 3px); border: 2px solid #aaa; border-bottom-color: #777; }
.bookmarks { height: 94px; margin-top: 4px; font-weight: bold; }
.signatures { height: 83px; }
.pages { height: 57px; }
.tabspace { flex: 1; }
.attachments { height: 100px; }
.comments { height: 91px; margin-top: -7px; margin-bottom: 40px; }
.tabtext { margin-bottom: 10px; }

.panel { flex: 0 0 193px; margin-left: 7px; display: flex; flex-direction: column; min-width: 0; border-right: 1px solid #a0a0a0; border-bottom: 1px solid #888; }
.panelhead { flex: 0 0 35px; display: flex; align-items: center; padding-left: 20px; gap: 11px; }
.panelhead svg { width: 16px; height: 16px; }
.options { gap: 5px; margin-left: -1px; }
.closepanel { margin-left: 5px; }
.panelhead .closepanel svg { width: 12px; height: 12px; }
.treebox { flex: 1; min-height: 0; display: flex; border-top: 1px solid #888; border-left: 1px solid #888; background: #fff; }
.tree { flex: 1; min-width: 0; margin: 0; padding: 2px 0 0 7px; list-style: none; font-size: 13px; }
.tree li { height: 22px; display: flex; align-items: center; white-space: nowrap; }
.tree a { color: #000; text-decoration: none; margin-left: 4px; }
.plus { width: 9px; height: 9px; border: 1px solid #777; margin-right: 4px; background: linear-gradient(#000, #000) center / 5px 1px no-repeat, linear-gradient(#000, #000) center / 1px 5px no-repeat; }
.bmicon { width: 16px; height: 16px; }
.vs { flex: 0 0 16px; background: #f0f0f0; display: flex; flex-direction: column; justify-content: space-between; align-items: center; padding: 3px 0; }
.chev { width: 12px; height: 12px; fill: none; stroke: #505050; stroke-width: 2; }
.chev.pale { stroke: #bbb; }
.hs { flex: 0 0 16px; display: flex; align-items: center; border-left: 1px solid #888; padding-left: 2px; }
.hs .thumb { width: 82px; height: 15px; margin-left: 3px; background: #cdcdcd; }
.hs .end { margin-left: 60px; }
.splitter { flex: 0 0 6px; display: flex; align-items: center; justify-content: center; border-left: 1px solid #fff; }
.splitter i { width: 4px; height: 24px; background: repeating-linear-gradient(#888 0 1px, #f0f0f0 1px 3px); }

.doc { flex: 1; min-width: 0; display: flex; flex-direction: column; border: 1px solid #888; border-right: 0; }
.canvas { flex: 1; min-height: 0; display: grid; grid-template-columns: minmax(0, 1fr) minmax(0, 1fr); grid-template-rows: 100%; gap: 10px; background: #c8c8c8; overflow: hidden; }
.page { background: #fff; }
.left { padding: 2px 90px 0 31px; box-shadow: 1px 0 #777; }
.right { display: grid; grid-template-columns: 252px auto; align-content: start; padding: 4px 0 0 72px; box-shadow: -1px 0 #888; }
h1 { margin: 0 -16px 22px; font-size: 18px; line-height: 20px; font-weight: bold; white-space: nowrap; }
.figure { width: 100%; height: auto; }
.art { fill: none; stroke: #111; stroke-width: 2.500; }
.art text { font: bold 27px "Liberation Sans", Arial, sans-serif; fill: #000; stroke: none; }
.art .grey { stroke: #555; stroke-width: 2; }
.art .bold { stroke-width: 4; }
.art .leader { stroke: #222; stroke-width: 2; }
.code { font: 8px "Liberation Sans", Arial, sans-serif; }
.caption { margin: 0 2px; font-size: 10px; font-weight: bold; line-height: 14px; }
.parts { margin: 0; padding: 0; list-style: none; font-size: 10px; line-height: 12px; }
.parts li { display: flex; white-space: nowrap; }
.parts span { width: 24px; }
.dochs { border-left: 0; padding-left: 0; background: #f0f0f0; }
.split { width: 17px; height: 15px; justify-content: center; border-right: 1px solid #ccc; }
.split svg { width: 12px; height: 12px; }
.size { margin: 0 22px 0 20px; white-space: nowrap; }
.track { flex: 1; margin-left: 40px; display: flex; }
.track .thumb { width: 93%; margin: 0; }
.dochs .end { margin: 0 1px 0 0; }
.docvs { flex: 0 0 17px; display: flex; flex-direction: column; align-items: center; padding: 8px 0 20px; border-bottom: 1px solid #888; }
.flyout { width: 16px; height: 18px; border: solid #a0a0a0; border-width: 1px 0; margin-bottom: 4px; justify-content: center; }
.flyout::before { content: ""; border: 5px solid transparent; border-left: 6px solid #000; border-right: 0; }
.vtrack { flex: 1; width: 15px; padding-top: 116px; }
.vthumb { display: block; height: 17px; background: #cdcdcd; }

.status { flex: 0 0 24px; display: grid; grid-template-columns: 540px 212px 74px 1fr; border-top: 1px solid #fff; }
.status > div { display: flex; align-items: center; }
.status svg { width: 16px; height: 16px; }
.views { padding-left: 11px; gap: 16px; border-right: 1px solid #a0a0a0; }
.pager { padding-left: 13px; border-right: 1px solid #a0a0a0; }
.pager button { width: 16px; }
.pager button:nth-of-type(2) { margin: 0 9px 0 15px; }
.pager button:nth-of-type(3) { margin: 0 16px 0 7px; }
.pager input { width: 74px; height: 21px; border: 1px solid #777; background: #fff; padding: 0; text-align: center; font: 12px Roboto, "Open Sans", sans-serif; }
.history { padding-left: 13px; gap: 16px; border-right: 1px solid #a0a0a0; }
.layouts { justify-content: flex-end; gap: 16px; }
.layouts .on { width: 34px; height: 22px; justify-content: center; background: #f8f8f8; border: solid #999; border-width: 1px 0 0 1px; margin-left: -7px; }
.edgeline { flex: 0 0 1px; background: linear-gradient(90deg, #1d3038 36px, #c0c0c0 36px 294px, #1b3340 294px 60%, #1b2448); }
</style>
